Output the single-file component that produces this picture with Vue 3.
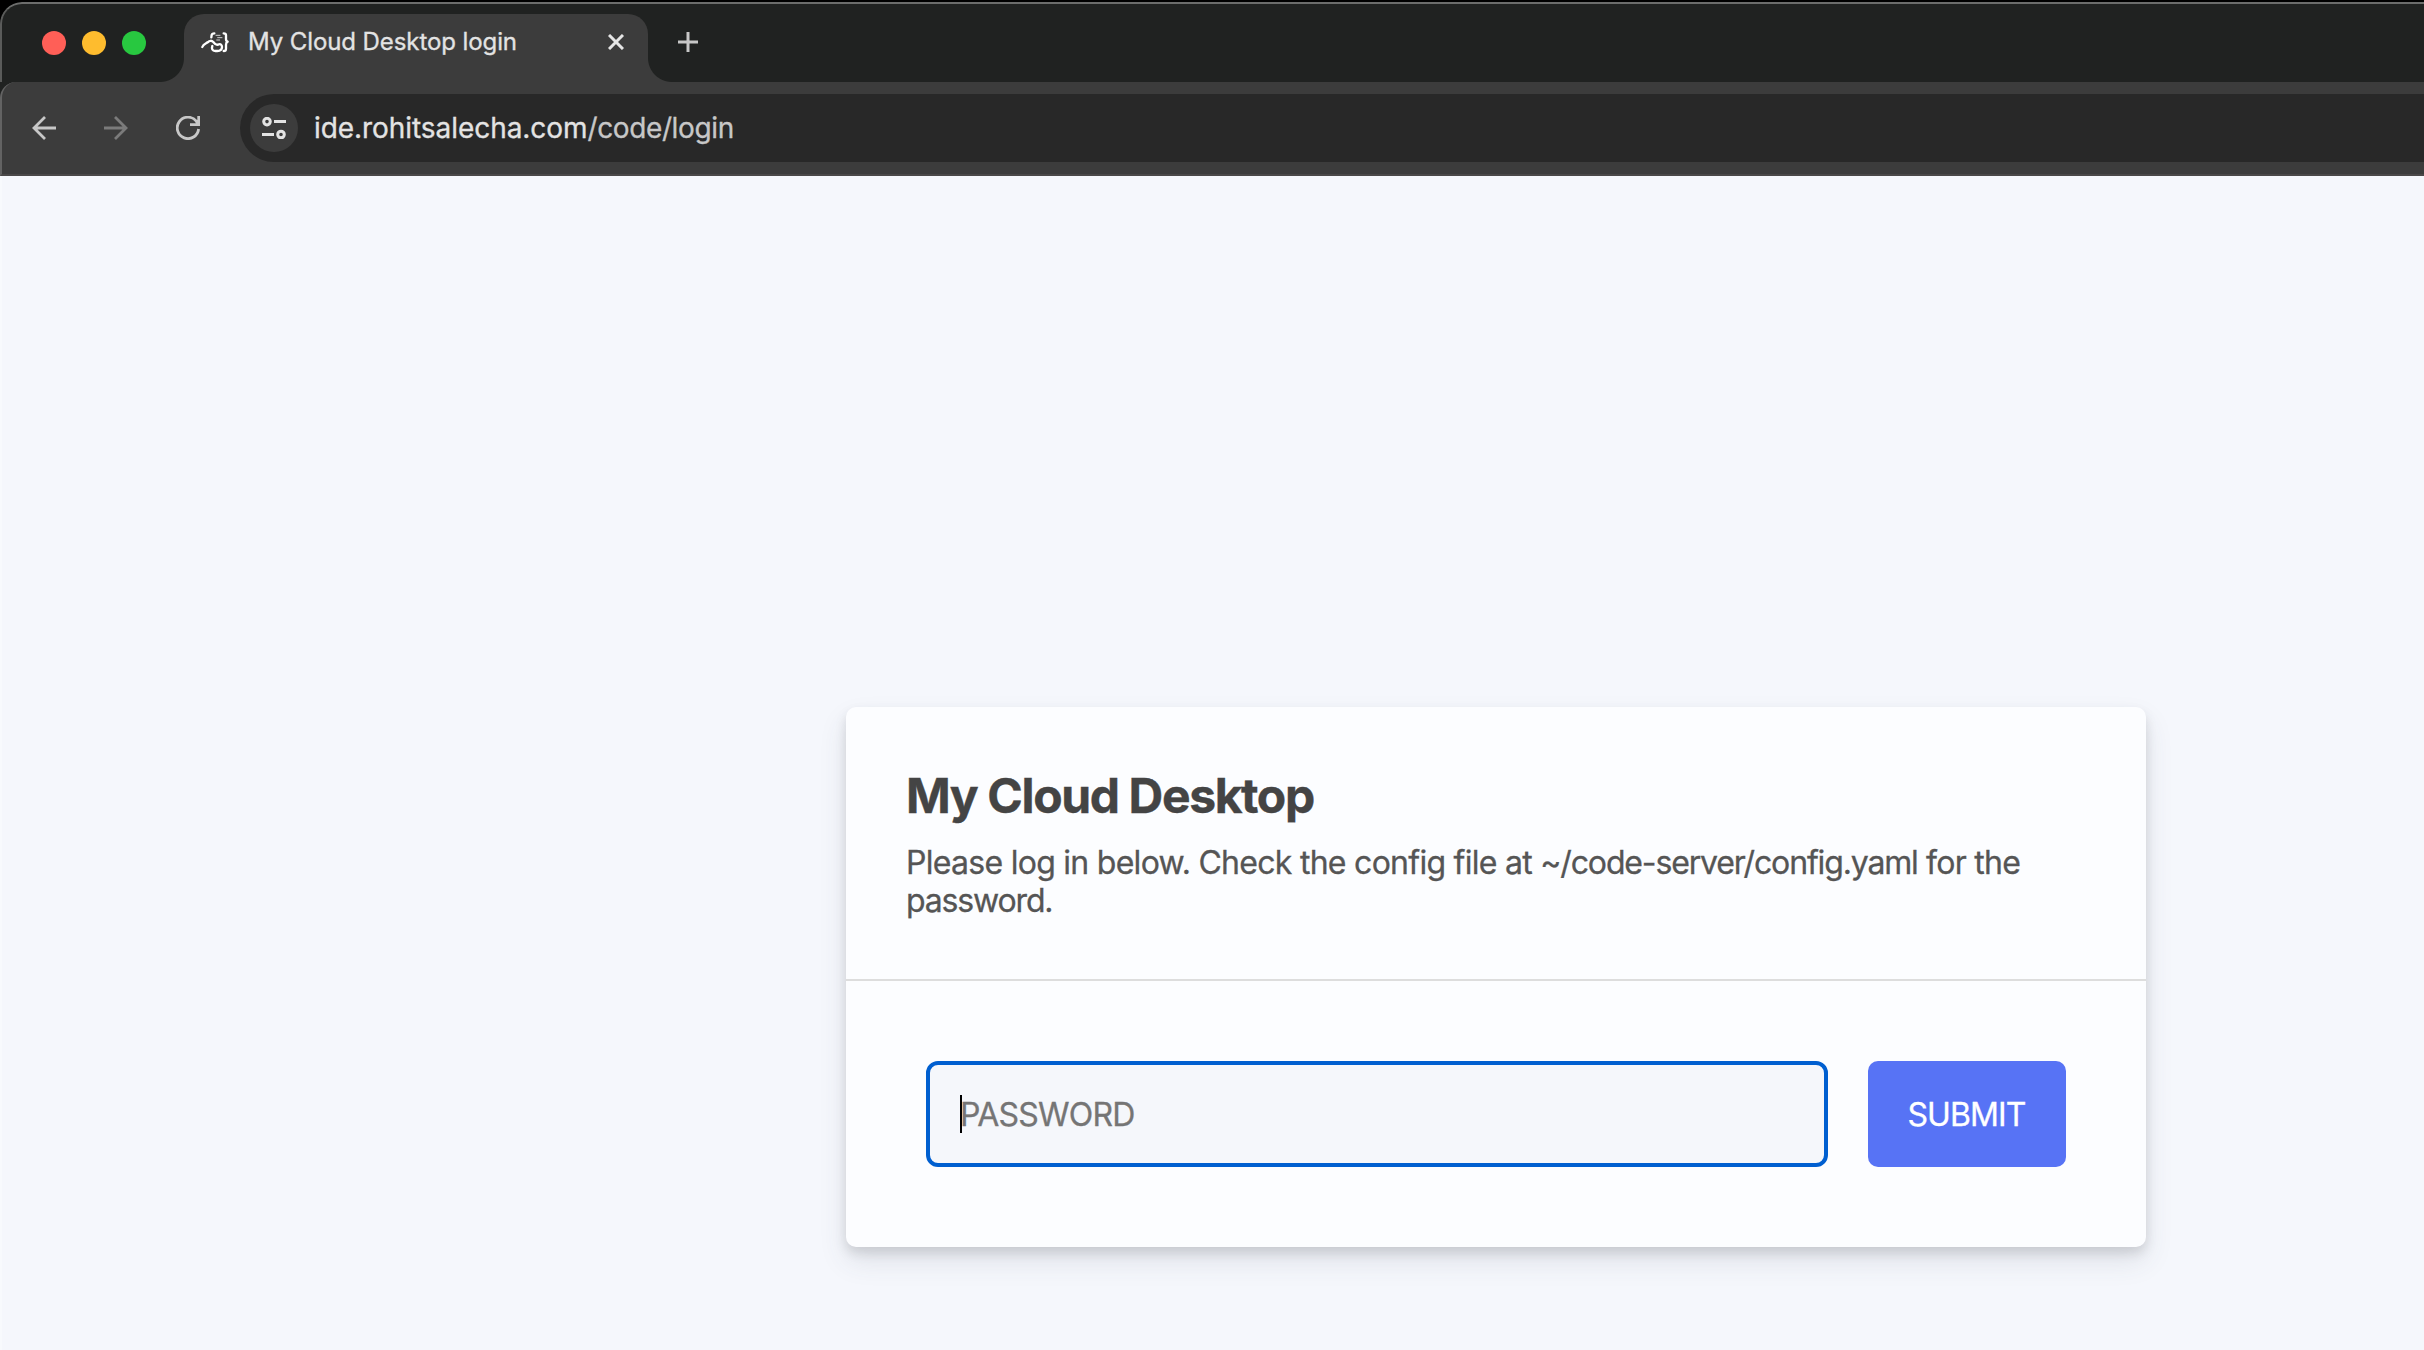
<script setup>
const host = 'ide.rohitsalecha.com'
const path = '/code/login'
</script>

<template>
  <div class="desktop">
    <div class="window">
      <header class="tabstrip">
        <div class="lights"><i class="red"></i><i class="yellow"></i><i class="green"></i></div>
        <div class="tab">
          <svg class="favicon" viewBox="0 0 90 66" fill="none" stroke="#fff" stroke-width="7" stroke-linecap="round" stroke-linejoin="round">
            <path d="M7 48C10 39 17 38 23 34C29 28 35 28 40 33C44 38 47 43 54 41C62 37 66 42 66 48C66 56 60 60 52 60H46C37 60 34 53 37 45" />
            <path d="M43 7Q36 7 35 12L34 19" />
            <path d="M71 7Q78 7 78 13V24Q78 31 83 32Q78 34 78 41V53Q78 60 71 60" />
            <path stroke-width="3" stroke="#ccc" d="M48 13H60M53 20H66M50 27H59" />
          </svg>
          <span class="tab-title">My Cloud Desktop login</span>
          <svg class="close" viewBox="0 0 16 16" stroke="#e6e6e6" stroke-width="3"><path d="M1 1L15 15M15 1L1 15" /></svg>
        </div>
        <svg class="plus" viewBox="0 0 20 20" stroke="#c7c7c7" stroke-width="3"><path d="M10 0V20M0 10H20" /></svg>
      </header>
      <nav class="toolbar">
        <svg class="nav-icon" viewBox="0 0 24 24" fill="none" stroke="#c7c7c7" stroke-width="2.8"><path d="M24 12H2M13 1L2 12L13 23" /></svg>
        <svg class="nav-icon" viewBox="0 0 24 24" fill="none" stroke="#7b7b7b" stroke-width="2.8"><path d="M0 12H22M11 1L22 12L11 23" /></svg>
        <svg class="nav-icon" viewBox="0 0 24 24" fill="none" stroke="#c7c7c7" stroke-width="2.8"><path d="M22.6 13A10.7 10.7 0 1 1 20.3 5.2L22 8M22.7 0V8.7H14" /></svg>
        <div class="omnibox">
          <span class="site-info">
            <svg viewBox="0 0 24 22" fill="none" stroke="#e3e3e3" stroke-width="3"><circle cx="5" cy="4.6" r="3.3" /><path d="M12 4.6H24M0 17.5H12" /><circle cx="19" cy="17.5" r="3.3" /></svg>
          </span>
          <span class="url"><span class="host">{{ host }}</span><span class="path">{{ path }}</span></span>
        </div>
      </nav>
      <main class="page">
        <section class="card">
          <div class="card-head">
            <h1>My Cloud Desktop</h1>
            <p>Please log in below. Check the config file at <span class="tight">~/code-server/config.yaml</span> for the <span class="tight">password.</span></p>
          </div>
          <form class="login" @submit.prevent>
            <div class="field"><i class="caret"></i><span class="placeholder">PASSWORD</span></div>
            <button type="submit">SUBMIT</button>
          </form>
        </section>
      </main>
    </div>
  </div>
</template>

<style>
html, body { margin: 0; background: #000; overflow: hidden; }
</style>

<style scoped>
* { box-sizing: border-box; }
.desktop { width: 2424px; height: 1350px; padding-top: 2px; overflow: hidden; background: #000; font-family: Inter, "Liberation Sans", sans-serif; }
.window { height: 1348px; border-top-left-radius: 22px; background: #202221; overflow: hidden; display: flex; flex-direction: column; }
.tabstrip { height: 80px; flex: none; display: flex; border-top: 2px solid #6c6d6c; border-left: 2px solid #5a5b5a; border-top-left-radius: 22px; background: #202221; }
.lights { display: flex; gap: 16px; width: 182px; padding: 27px 0 0 40px; }
.lights i { width: 24px; height: 24px; border-radius: 50%; }
.red { background: #ff5f57; }
.yellow { background: #febc2e; }
.green { background: #28c840; }
.tab { position: relative; width: 464px; height: 68px; margin-top: 10px; padding-left: 16px; border-radius: 20px 20px 0 0; background: #3c3c3c; display: flex; }
.tab::before, .tab::after { content: ""; position: absolute; bottom: 0; width: 24px; height: 24px; }
.tab::before { left: -24px; background: radial-gradient(circle at 0 0, transparent 23.5px, #3c3c3c 24.5px); }
.tab::after { right: -24px; background: radial-gradient(circle at 100% 0, transparent 23.5px, #3c3c3c 24.5px); }
.favicon { width: 30px; height: 22px; margin-top: 17px; }
.tab-title { margin-left: 18px; margin-top: 13px; line-height: 30px; font-size: 24px; letter-spacing: -.09px; -webkit-text-stroke: .3px; color: #e3e3e3; white-space: nowrap; flex: 1; }
.close { width: 16px; height: 16px; margin: 20px 24px 0 0; }
.plus { width: 20px; height: 20px; margin: 28px 0 0 30px; }
.toolbar { height: 94px; flex: none; display: flex; align-items: flex-start; padding: 12px 0 0 30px; border-left: 2px solid #636363; border-bottom: 2px solid #4a4848; border-top-left-radius: 16px; background: #3c3c3c; }
.nav-icon { width: 24px; height: 24px; margin: 22px 48px 0 0; }
.omnibox { flex: 1; height: 68px; margin-left: -8px; padding-left: 10px; border-radius: 34px 0 0 34px; background: #282828; display: flex; align-items: center; }
.site-info { width: 48px; height: 48px; border-radius: 50%; background: #3c3c3c; display: flex; align-items: center; justify-content: center; }
.site-info svg { width: 24px; height: 22px; }
.url { margin-left: 16px; font-size: 28px; line-height: 36px; white-space: nowrap; -webkit-text-stroke: .3px; }
.host { color: #e3e3e3; letter-spacing: -.06px; }
.path { color: #c7c7c7; letter-spacing: -.38px; }
.page { flex: 1; border-left: 2px solid #f8fafd; background: #f5f7fc; padding: 531px 0 0 844px; }
.card { width: 1300px; height: 540px; border-radius: 10px; background: #fcfdff; box-shadow: rgba(60, 66, 87, .118) 0 14px 28px, rgba(0, 0, 0, .118) 0 6px 12px; }
.card-head { height: 274px; padding: 60px; border-bottom: 2px solid #ddd; }
h1 { margin: 0; font-size: 48px; line-height: 57px; font-weight: 700; letter-spacing: -1.37px; -webkit-text-stroke: .4px; color: #444; white-space: nowrap; }
p { margin: 20px 0 0; font-size: 32px; line-height: 38px; letter-spacing: -.72px; -webkit-text-stroke: .3px; color: #555; }
.tight { letter-spacing: -1.15px; }
.login { display: flex; gap: 40px; padding: 80px; }
.field { position: relative; width: 902px; height: 106px; border: 4px solid #005fd0; border-radius: 12px; background: #f5f7fb; display: flex; align-items: center; padding-left: 30px; }
.caret { position: absolute; left: 30px; top: 30px; width: 2px; height: 38px; background: #000; }
.placeholder { position: relative; top: 1px; font-size: 32px; line-height: 38px; letter-spacing: -.78px; -webkit-text-stroke: .3px; color: #757575; }
button { width: 198px; height: 106px; padding: 2px 1px 0 0; border: 0; border-radius: 10px; background: #5773f5; color: #fff; font: 32px/38px Inter, "Liberation Sans", sans-serif; letter-spacing: -.9px; -webkit-text-stroke: .3px; }
</style>
